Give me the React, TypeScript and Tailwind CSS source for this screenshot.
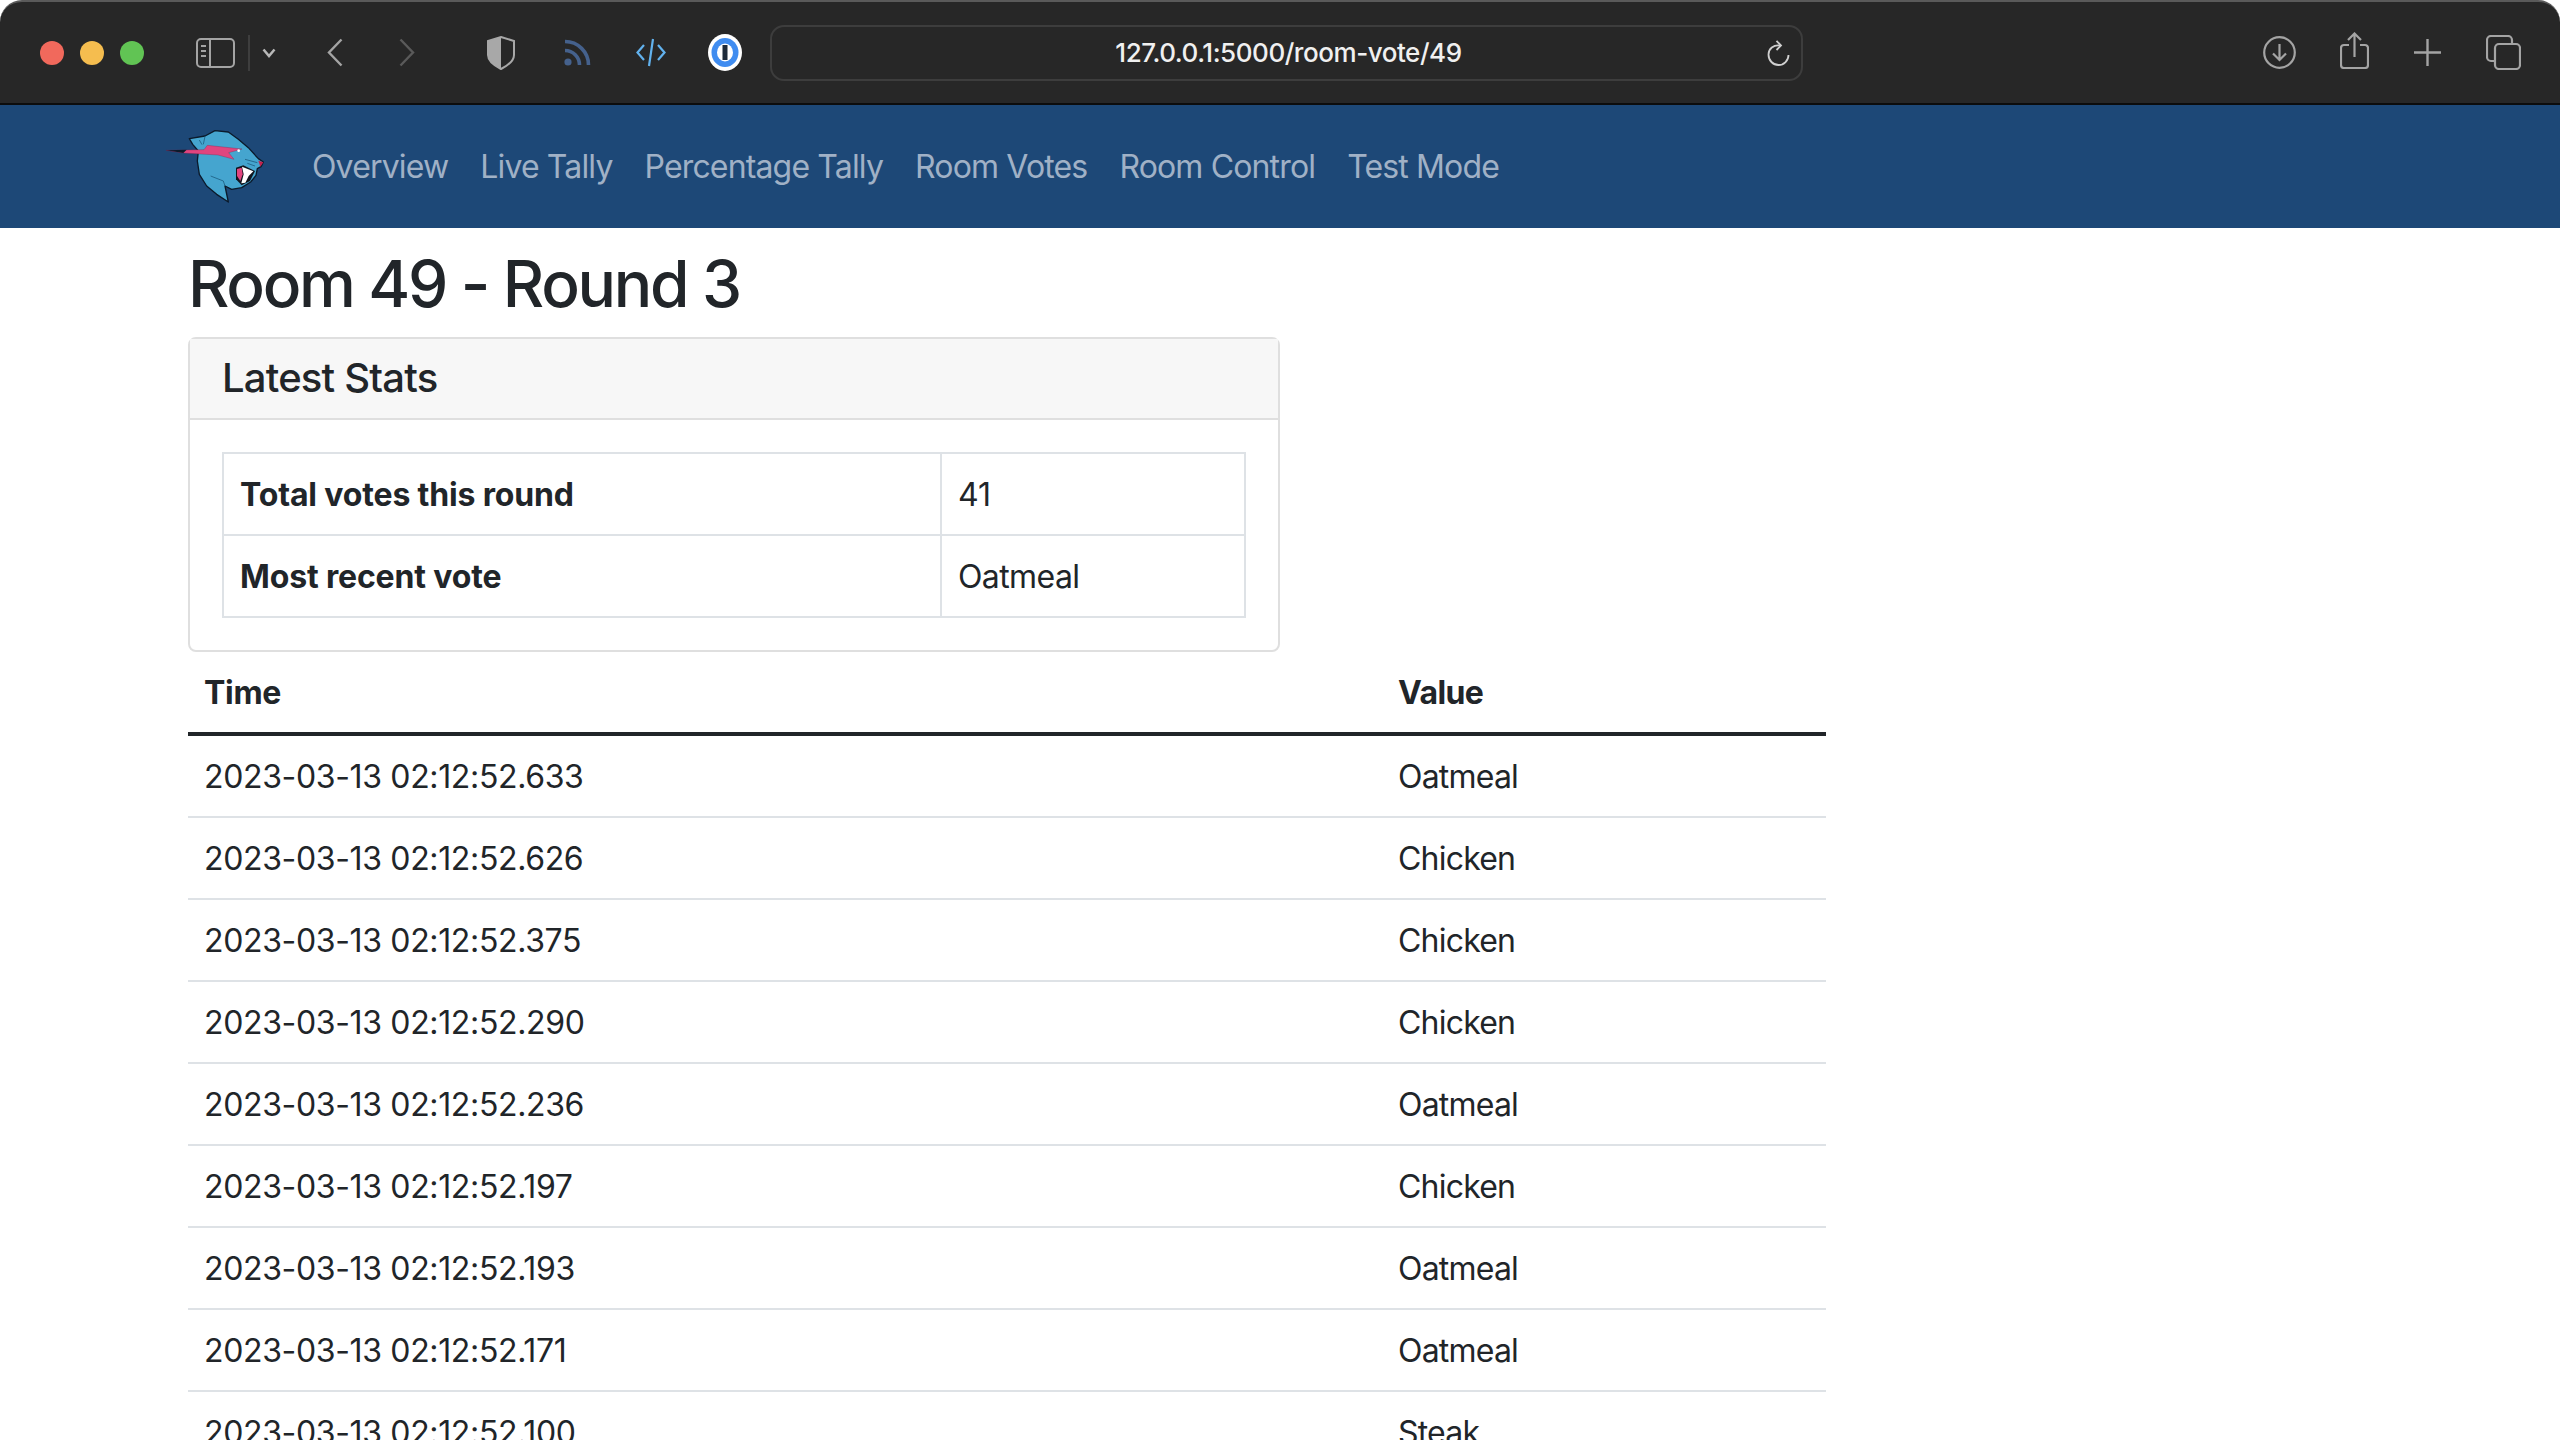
import React from 'react';

const links = ['Overview', 'Live Tally', 'Percentage Tally', 'Room Votes', 'Room Control', 'Test Mode'];

const votes = [
  ['2023-03-13 02:12:52.633', 'Oatmeal'],
  ['2023-03-13 02:12:52.626', 'Chicken'],
  ['2023-03-13 02:12:52.375', 'Chicken'],
  ['2023-03-13 02:12:52.290', 'Chicken'],
  ['2023-03-13 02:12:52.236', 'Oatmeal'],
  ['2023-03-13 02:12:52.197', 'Chicken'],
  ['2023-03-13 02:12:52.193', 'Oatmeal'],
  ['2023-03-13 02:12:52.171', 'Oatmeal'],
  ['2023-03-13 02:12:52.100', 'Steak'],
];

const Logo = () => (
  <svg width="110" height="82" viewBox="0 0 330 246" className="block shrink-0">
    <path
      d="M88 38 L135 30 L165 14 L205 18 L235 40 L265 65 L295 98 L310 108 L303 122 L292 128 L288 148 L272 168 L245 185 L215 190 L195 180 L205 228 L170 205 L140 180 L118 145 L112 105 L115 75 L98 55 Z"
      fill="#45a5cf"
      stroke="#0b1a2b"
      strokeWidth="4"
      strokeLinejoin="round"
    />
    <path d="M18 73 L132 71 L142 58 L246 69 L206 80 L222 100 L174 87 L70 81 Z" fill="#e0457f" stroke="#7d2048" strokeWidth="1" />
    <path d="M18 73 L80 71 L70 81 Z" fill="#0b1a2b" />
    <circle cx="236" cy="74" r="4" fill="#fff" />
    <path d="M228 125 L250 118 L285 135 L270 165 L245 178 L228 160 Z" fill="#10161f" />
    <path d="M231 129 L245 125 L248 145 L241 165 L231 150 Z" fill="#e0457f" />
    <path d="M246 122 L280 136 L266 150 L256 170 L244 172 L251 145 Z" fill="#fff" />
    <path d="M295 104 L310 109 L301 122 Z" fill="#c2234f" />
    <path d="M135 31 L130 55 M118 42 L126 56 M152 150 L190 165 M190 165 L195 180 M255 100 L292 110 M262 112 L285 120" stroke="#1d5f82" strokeWidth="2.5" fill="none" />
  </svg>
);

const App = () => {
  return (
    <div className="h-[1440px] w-[2560px] overflow-hidden bg-white font-['Inter',sans-serif] text-[32px] leading-[48px] text-[#212529]">
      {/* Safari toolbar */}
      <div className="flex h-[105px] items-center rounded-t-[22px] border-t-2 border-b-2 border-t-[#5a5a5a] border-b-[#0c0c0c] bg-[#272727] pl-10">
        <div className="flex gap-4">
          <div className="size-6 rounded-full bg-[#f1695c]" />
          <div className="size-6 rounded-full bg-[#f5bd4f]" />
          <div className="size-6 rounded-full bg-[#61c454]" />
        </div>

        <svg width="39" height="30" viewBox="0 0 39 30" fill="none" className="ml-[52px] shrink-0">
          <rect x="1" y="1" width="37" height="28" rx="4" stroke="#a4a4a4" strokeWidth="2" />
          <path d="M14 1V29" stroke="#a4a4a4" strokeWidth="2" />
          <path d="M5 8H10M5 13H10M5 18H10" stroke="#a4a4a4" strokeWidth="2" />
        </svg>
        <div className="ml-[13px] h-9 w-0.5 bg-[#3e3e3e]" />
        <svg width="14" height="10" viewBox="0 0 14 10" fill="none" className="ml-3 shrink-0">
          <path d="M1.5 1.5L7 8L12.5 1.5" stroke="#b8b8b8" strokeWidth="2.5" />
        </svg>

        <svg width="16" height="29" viewBox="0 0 16 29" fill="none" className="ml-[51px] shrink-0">
          <path d="M14.5 1.5L2 14.5L14.5 27.5" stroke="#a4a4a4" strokeWidth="2.4" />
        </svg>
        <svg width="16" height="29" viewBox="0 0 16 29" fill="none" className="ml-14 shrink-0">
          <path d="M1.5 1.5L14 14.5L1.5 27.5" stroke="#5a5a5a" strokeWidth="2.4" />
        </svg>

        <svg width="28" height="34" viewBox="0 0 28 34" fill="none" className="ml-[72px] shrink-0">
          <path d="M14 1L27 5V19C27 25 20 30 14 33C8 30 1 25 1 19V5Z" stroke="#a8a8a8" strokeWidth="2" />
          <path d="M14 1L1 5V19C1 25 8 30 14 33Z" fill="#a8a8a8" />
        </svg>
        <svg width="27" height="27" viewBox="0 0 27 27" fill="none" className="ml-[49px] shrink-0">
          <circle cx="4" cy="23" r="3.6" fill="#45618c" />
          <path d="M1 11.5C9 11.5 15.5 18 15.5 26" stroke="#45618c" strokeWidth="3.6" />
          <path d="M1 2.5C14 2.5 24.5 13 24.5 26" stroke="#45618c" strokeWidth="3.6" />
        </svg>
        <svg width="30" height="29" viewBox="0 0 30 29" fill="none" className="ml-[45px] shrink-0">
          <path d="M8 7L1.5 14.5L8 22M22 7L28.5 14.5L22 22M17 1L13 28" stroke="#62b2ee" strokeWidth="2.2" />
        </svg>
        <svg width="34" height="37" viewBox="0 0 34 37" fill="none" className="ml-[42px] shrink-0">
          <ellipse cx="17" cy="18.5" rx="17" ry="18.5" fill="#fff" />
          <ellipse cx="17" cy="18.5" rx="13.5" ry="14.5" fill="#3f8cf0" />
          <ellipse cx="17" cy="18.5" rx="8" ry="9" fill="#fff" />
          <rect x="14.5" y="11" width="5" height="15" fill="#1d2a3a" />
        </svg>

        <div className="relative ml-7 flex h-14 w-[1033px] shrink-0 items-center justify-center rounded-[14px] border-2 border-[#3d3d3d]">
          <span className="pl-1 text-[26px] leading-none font-medium tracking-[-0.45px] text-[#f0f0f0]">127.0.0.1:5000/room-vote/49</span>
          <svg width="23" height="26" viewBox="0 0 23 26" fill="none" className="absolute top-[13px] right-[11px]">
            <path d="M13 5.5C6.5 4.5 1.5 9 1.5 14.5C1.5 20.5 6 25 11.5 25C17 25 21.5 20.5 21.5 15" stroke="#d0d0d0" strokeWidth="1.8" />
            <path d="M9.5 0.8L14 5.5L9.5 10" stroke="#d0d0d0" strokeWidth="1.8" />
          </svg>
        </div>

        <svg width="33" height="33" viewBox="0 0 33 33" fill="none" className="ml-[460px] shrink-0">
          <circle cx="16.5" cy="16.5" r="15.3" stroke="#a4a4a4" strokeWidth="2.2" />
          <path d="M16.5 8V24M10 17.5L16.5 24L23 17.5" stroke="#a4a4a4" strokeWidth="2.2" />
        </svg>
        <svg width="29" height="37" viewBox="0 0 29 37" fill="none" className="ml-11 shrink-0 -mt-1">
          <path d="M9 13H4C2.3 13 1 14.3 1 16V33C1 34.7 2.3 36 4 36H25C26.7 36 28 34.7 28 33V16C28 14.3 26.7 13 25 13H20" stroke="#a4a4a4" strokeWidth="2.2" />
          <path d="M14.5 2V25M8 8L14.5 1.5L21 8" stroke="#a4a4a4" strokeWidth="2.2" />
        </svg>
        <svg width="27" height="27" viewBox="0 0 27 27" fill="none" className="ml-[45px] shrink-0">
          <path d="M13.5 0V27M0 13.5H27" stroke="#a4a4a4" strokeWidth="2.4" />
        </svg>
        <svg width="35" height="35" viewBox="0 0 35 35" fill="none" className="ml-[45px] shrink-0">
          <path d="M8 26H5C2.8 26 1 24.2 1 22V5C1 2.8 2.8 1 5 1H22C24.2 1 26 2.8 26 5V8" stroke="#a4a4a4" strokeWidth="2.2" />
          <rect x="9" y="9" width="25" height="25" rx="4" stroke="#a4a4a4" strokeWidth="2.2" />
        </svg>
      </div>

      {/* Navbar */}
      <nav className="flex h-[123px] items-center bg-[#1d4877] pl-40">
        <Logo />
        <div className="ml-[26px] flex">
          {links.map((link) => (
            <a key={link} className="px-4 tracking-[-0.85px] text-[#a0b1c6]">
              {link}
            </a>
          ))}
        </div>
      </nav>

      {/* Content */}
      <main className="ml-[188px] w-[1638px]">
        <h1 className="mb-[7px] pt-[9px] text-[64px] leading-[93px] font-medium tracking-[-2.3px]">Room 49 - Round 3</h1>

        <section className="w-[1092px] rounded-lg border-2 border-[#dfdfdf]">
          <div className="flex h-[81px] items-center border-b-2 border-[#dfdfdf] bg-[#f7f7f7] px-8 pb-0.5 text-[40px] font-medium tracking-[-0.8px]">
            Latest Stats
          </div>
          <div className="p-8">
            <table className="w-full border-collapse">
              <tbody>
                <tr>
                  <th className="w-[718px] border-2 border-[#dee2e6] px-4 pt-[17px] pb-[15px] text-left font-bold tracking-[-0.15px]">Total votes this round</th>
                  <td className="border-2 border-[#dee2e6] px-4 pt-[17px] pb-[15px]">41</td>
                </tr>
                <tr>
                  <th className="border-2 border-[#dee2e6] px-4 pt-[17px] pb-[15px] text-left font-bold tracking-[-0.15px]">Most recent vote</th>
                  <td className="border-2 border-[#dee2e6] px-4 pt-[17px] pb-[15px] tracking-[-0.6px]">Oatmeal</td>
                </tr>
              </tbody>
            </table>
          </div>
        </section>

        <table className="w-full border-collapse">
          <thead>
            <tr className="border-b-4 border-[#212529]">
              <th className="w-[1194px] px-4 pt-[17px] pb-[15px] text-left font-bold tracking-[-0.3px]">Time</th>
              <th className="px-4 pt-[17px] pb-[15px] text-left font-bold tracking-[-0.6px]">Value</th>
            </tr>
          </thead>
          <tbody>
            {votes.map(([time, value]) => (
              <tr key={time} className="border-b-2 border-[#dee2e6]">
                <td className="px-4 pt-[17px] pb-[15px] tracking-[-0.35px]">{time}</td>
                <td className="px-4 pt-[17px] pb-[15px] tracking-[-0.8px]">{value}</td>
              </tr>
            ))}
          </tbody>
        </table>
      </main>
    </div>
  );
};

export default App;
